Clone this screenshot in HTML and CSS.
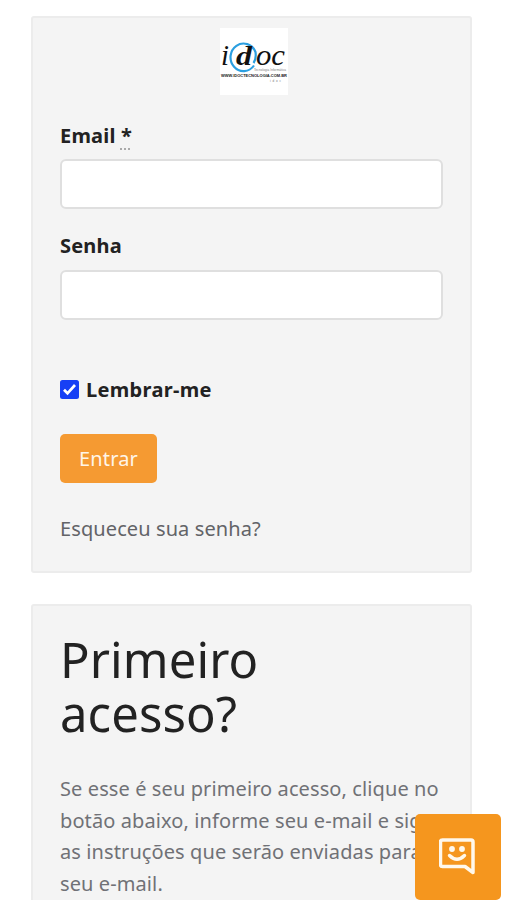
FILE: index.html
```html
<!DOCTYPE html>
<html lang="pt-BR">
<head>
<meta charset="utf-8">
<title>idoc</title>
<link rel="stylesheet" href="styles.css">
</head>
<body>
<main class="page">
  <form class="card login">
    <svg class="logo" viewBox="0 0 68 67" aria-label="idoc">
      <rect width="68" height="67" fill="#fff"/>
      <path d="M34 37.500A13 13.800 0 1 1 35.500 24Q36.500 31 33.500 35" fill="none" stroke="#2b9fe0" stroke-width="2.200"/>
      <g class="wordmark">
        <text x="1" y="37" textLength="8" lengthAdjust="spacingAndGlyphs">i</text>
        <text class="strong" x="16" y="37" textLength="16" lengthAdjust="spacingAndGlyphs">d</text>
        <text x="36" y="37" textLength="29" lengthAdjust="spacingAndGlyphs">oc</text>
      </g>
      <text class="tiny" x="34" y="43" textLength="32">Tecnologia Informática</text>
      <text class="tiny url" x="1" y="49" textLength="66" lengthAdjust="spacingAndGlyphs">WWW.IDOCTECNOLOGIA.COM.BR</text>
      <text class="tiny" x="50" y="54" textLength="11">idoc</text>
    </svg>
    <label class="label" for="email">Email <abbr title="obrigatório">*</abbr></label>
    <input class="field" id="email" type="text">
    <label class="label second" for="senha">Senha</label>
    <input class="field" id="senha" type="password">
    <label class="remember">
      <svg class="check" viewBox="0 0 19 19"><rect width="19" height="19" rx="2.500" fill="#1740f5"/><path d="M4 9.800 7.500 13.300 15 5" fill="none" stroke="#fff" stroke-width="2.700"/></svg>
      <span>Lembrar-me</span>
    </label>
    <button class="enter" type="button">Entrar</button>
    <a class="forgot">Esqueceu sua senha?</a>
  </form>
  <section class="card first">
    <h1>Primeiro<br>acesso?</h1>
    <p>Se esse é seu primeiro acesso, clique no<br>botão abaixo, informe seu e-mail e siga<br>as instruções que serão enviadas para o<br>seu e-mail.</p>
  </section>
</main>
<div class="chat">
  <svg viewBox="0 0 40 40">
    <path d="M3.500 2H32Q34 2 34 4V34.500L26 28.500H3.500Q1.500 28.500 1.500 26.500V4Q1.500 2 3.500 2Z" fill="none" stroke="#fff8ec" stroke-width="3.500" stroke-linejoin="round"/>
    <circle cx="13" cy="11" r="2.900" fill="#fff8ec"/><circle cx="23" cy="11" r="2.900" fill="#fff8ec"/>
    <path d="M10.500 17.500Q18 25 25.500 17.500" fill="none" stroke="#fff8ec" stroke-width="3.400" stroke-linecap="round"/>
  </svg>
</div>
</body>
</html>
```
FILE: styles.css
```css
* { box-sizing: border-box; }
html, body { height: 900px; overflow: hidden; }
body {
  margin: 0;
  background: #fff;
  color: #222;
  font-family: "Noto Sans", sans-serif;
  font-size: 20px;
}
.page { padding: 16px 34px 0 31px; }
.card {
  width: 441px;
  padding: 0 27px;
  border: 2px solid #ececec;
  border-radius: 3px;
  background: #f4f4f4;
}
.login { height: 557px; display: flex; flex-direction: column; align-items: flex-start; }
.logo { width: 68px; height: 67px; margin: 10px 0 0 160px; flex: none; }
.wordmark { font: italic 29px "Liberation Serif", serif; fill: #111; }
.strong { font-weight: bold; font-size: 28px; }
.tiny { font: 3px "Liberation Sans", sans-serif; fill: #777; }
.url { font-size: 3.6px; font-weight: bold; fill: #222; }
.label { font-weight: bold; line-height: 30px; margin-top: 26px; height: 30px; letter-spacing: .18px; }
.label.second { margin-top: 22px; }
.label abbr { text-decoration: underline dotted #aaa 2px; text-underline-offset: 5px; }
.field {
  width: 383px;
  height: 50px;
  margin: 8px 0 0;
  border: 2px solid #dfdfdf;
  border-radius: 6px;
  background: #fff;
  outline: 0;
}
.label.second + .field { margin-top: 9px; }
.remember { display: flex; align-items: center; gap: 7px; height: 30px; margin-top: 54px; font-weight: bold; letter-spacing: .33px; }
.check { width: 19px; height: 19px; }
.enter {
  width: 97px;
  height: 49px;
  margin: 30px 0 0;
  padding: 0;
  border: 0;
  border-radius: 5px;
  background: #f59a32;
  color: #fff5e8;
  font: 20px "Noto Sans", sans-serif;
  letter-spacing: .15px;
}
.forgot { margin-top: 31px; line-height: 30px; color: #626367; letter-spacing: .1px; }
.first { height: 340px; margin-top: 31px; }
h1 { margin: 26px 0 0; font-size: 49px; font-weight: 400; line-height: 54px; letter-spacing: .1px; }
p { margin: 33px 0 0; color: #707176; line-height: 31.600px; letter-spacing: .1px; white-space: nowrap; }
.chat {
  position: fixed;
  left: 415px;
  top: 814px;
  width: 86px;
  height: 86px;
  border-radius: 5px;
  background: #f5961e;
}
.chat svg { display: block; width: 40px; height: 40px; margin: 24px 0 0 24px; }
```
